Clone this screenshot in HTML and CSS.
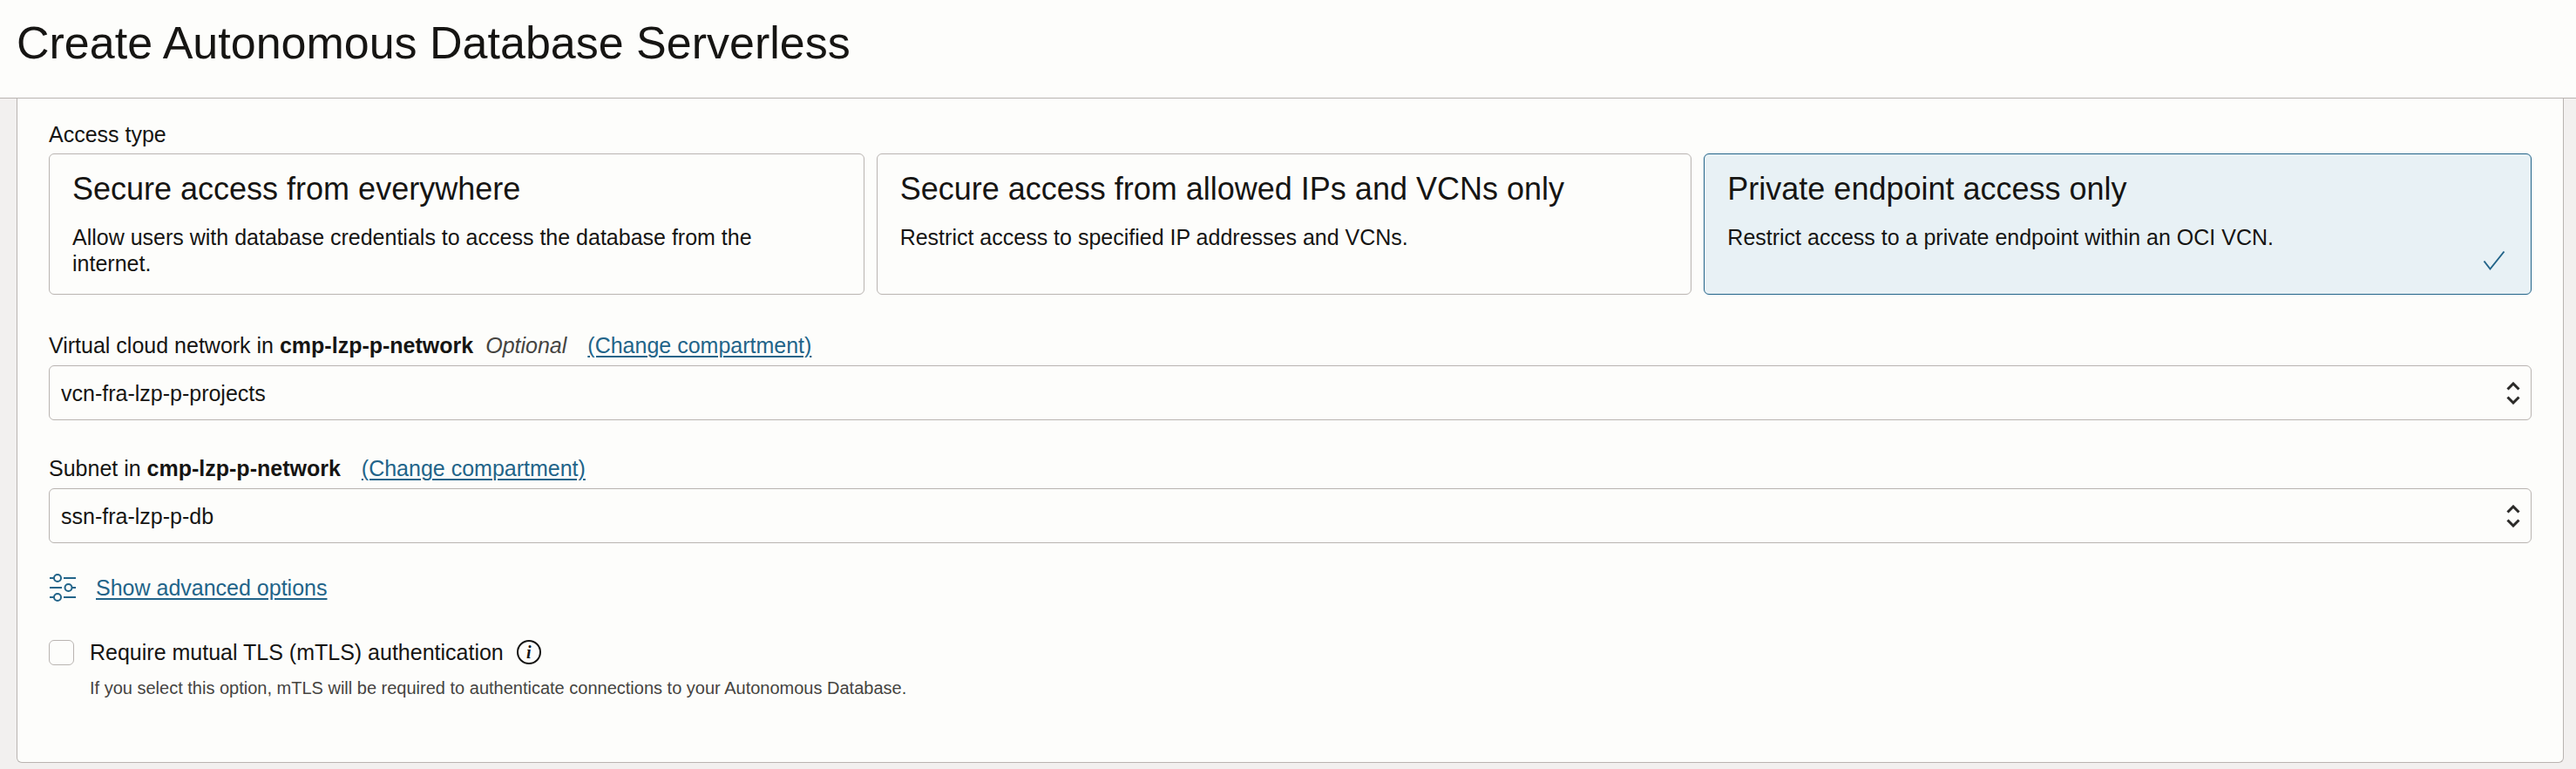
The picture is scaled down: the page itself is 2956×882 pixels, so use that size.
FILE: index.html
```html
<!DOCTYPE html>
<html lang="en">
<head>
<meta charset="utf-8">
<title>Create Autonomous Database Serverless</title>
<link rel="stylesheet" href="styles.css">
</head>
<body>
<header class="page-header">
  <h1 class="page-title">Create Autonomous Database Serverless</h1>
</header>
<main class="panel">
  <form>
    <fieldset class="access">
      <legend class="access-legend">Access type</legend>
      <div class="cards">
        <label class="card">
          <input class="card-radio" type="radio" name="access">
          <span class="card-title">Secure access from everywhere</span>
          <span class="card-text">Allow users with database credentials to access the database from the internet.</span>
        </label>
        <label class="card">
          <input class="card-radio" type="radio" name="access">
          <span class="card-title">Secure access from allowed IPs and VCNs only</span>
          <span class="card-text">Restrict access to specified IP addresses and VCNs.</span>
        </label>
        <label class="card card-selected">
          <input class="card-radio" type="radio" name="access" checked>
          <span class="card-title">Private endpoint access only</span>
          <span class="card-text">Restrict access to a private endpoint within an OCI VCN.</span>
          <svg class="card-check" viewBox="0 0 26 24" aria-hidden="true"><path d="M1.5 12.5 8.5 21.5 24.5 1.5"/></svg>
        </label>
      </div>
    </fieldset>

    <div class="field">
      <div class="field-head">
        <label for="vcn">Virtual cloud network in <strong>cmp-lzp-p-network</strong></label>
        <em class="optional">Optional</em>
        <a class="link change" href="#">(Change compartment)</a>
      </div>
      <div class="select-wrap">
        <select class="select" id="vcn"><option>vcn-fra-lzp-p-projects</option></select>
        <svg class="select-arrows" viewBox="0 0 16 26" aria-hidden="true"><path d="M1.5 8.5 8 2l6.500 6.500M1.500 17.500 8 24l6.500-6.500"/></svg>
      </div>
    </div>

    <div class="field">
      <div class="field-head">
        <label for="subnet">Subnet in <strong>cmp-lzp-p-network</strong></label>
        <a class="link change" href="#">(Change compartment)</a>
      </div>
      <div class="select-wrap">
        <select class="select" id="subnet"><option>ssn-fra-lzp-p-db</option></select>
        <svg class="select-arrows" viewBox="0 0 16 26" aria-hidden="true"><path d="M1.5 8.5 8 2l6.500 6.500M1.500 17.500 8 24l6.500-6.500"/></svg>
      </div>
    </div>

    <div class="advanced">
      <svg class="advanced-icon" viewBox="0 0 32 32" aria-hidden="true">
        <path d="M1 5h5M17 5h14M1 16h14M27 16h4M1 27h5M17 27h14"/>
        <circle cx="10" cy="5" r="4"/><circle cx="22.500" cy="16" r="4"/><circle cx="10" cy="27" r="4"/>
      </svg>
      <a class="link" href="#">Show advanced options</a>
    </div>

    <div class="mtls">
      <input class="checkbox" type="checkbox" id="mtls" aria-describedby="mtls-hint">
      <label for="mtls">Require mutual TLS (mTLS) authentication</label>
      <button class="info" type="button" aria-label="More information">i</button>
    </div>
    <p class="hint" id="mtls-hint">If you select this option, mTLS will be required to authenticate connections to your Autonomous Database.</p>
  </form>
</main>
</body>
</html>
```

FILE: styles.css
```css
:root {
  --ink: #161513;
  --muted: #454441;
  --line: #b9b4b1;
  --blue: #226489;
  --surface: #fdfdfb;
}

* { box-sizing: border-box; }

body {
  margin: 0;
  background: #f2f0ef;
  color: var(--ink);
  font: 25px/30px "Liberation Sans", Arial, sans-serif;
}

.page-header {
  padding: 19px 19px 33px;
  background: var(--surface);
  border-bottom: 1px solid var(--line);
}

.page-title {
  margin: 0;
  font-size: 52px;
  line-height: 60px;
  font-weight: 400;
}

.panel {
  margin: 0 14px 7px 19px;
  padding: 26px 36px 73px;
  background: var(--surface);
  border: 1px solid var(--line);
  border-top: 0;
  border-radius: 0 0 6px 6px;
}

.access {
  margin: 0;
  padding: 0;
  border: 0;
  min-width: 0;
}

.access-legend {
  padding: 0;
  margin-bottom: 7px;
}

.cards {
  display: grid;
  grid-template-columns: repeat(3, 1fr);
}

.card {
  position: relative;
  display: flex;
  flex-direction: column;
  gap: 20px;
  margin-right: 14px;
  padding: 20px 26px;
  border: 1px solid var(--line);
  border-radius: 6px;
  cursor: pointer;
}

.card:last-child { margin-right: 0; }

.card-selected {
  background: #e8f1f5;
  border-color: var(--blue);
}

.card-radio {
  position: absolute;
  margin: 0;
  opacity: 0;
}

.card-title {
  font-size: 36px;
  line-height: 40px;
}

.card-text { padding-right: 60px; }

.card-check {
  position: absolute;
  right: 29px;
  bottom: 26px;
  width: 26px;
  height: 24px;
  fill: none;
  stroke: var(--blue);
  stroke-width: 2;
}

.field { margin-top: 40px; }

.access + .field { margin-top: 43px; }

.field-head {
  display: flex;
  align-items: baseline;
  margin-bottom: 8px;
}

.optional {
  margin-left: 14px;
  color: var(--muted);
}

.link {
  color: var(--blue);
  text-decoration: underline;
  text-decoration-thickness: 2px;
  text-underline-offset: 3px;
}

.change { margin-left: 24px; }

.select-wrap {
  position: relative;
  display: flex;
}

.select {
  appearance: none;
  flex: 1;
  height: 63px;
  padding: 0 48px 0 13px;
  background: var(--surface);
  border: 1px solid var(--line);
  border-radius: 6px;
  color: inherit;
  font: inherit;
}

.select-arrows {
  position: absolute;
  right: 13px;
  top: 19px;
  width: 16px;
  height: 26px;
  fill: none;
  stroke: #2b2a28;
  stroke-width: 3;
  pointer-events: none;
}

.advanced {
  display: flex;
  align-items: center;
  gap: 22px;
  margin-top: 35px;
}

.advanced-icon {
  width: 32px;
  height: 32px;
  fill: none;
  stroke: var(--blue);
  stroke-width: 2;
}

.mtls {
  display: flex;
  align-items: center;
  margin-top: 43px;
}

.checkbox {
  appearance: none;
  width: 29px;
  height: 29px;
  margin: 0 18px 0 0;
  background: var(--surface);
  border: 1px solid var(--line);
  border-radius: 6px;
}

.info {
  width: 28px;
  height: 28px;
  margin-left: 15px;
  padding: 0;
  background: none;
  border: 2px solid var(--ink);
  border-radius: 50%;
  color: var(--ink);
  font: italic bold 20px/22px "Liberation Serif", serif;
}

.hint {
  margin: 14px 47px 0;
  color: var(--muted);
  font-size: 20px;
  line-height: 24px;
}
```
